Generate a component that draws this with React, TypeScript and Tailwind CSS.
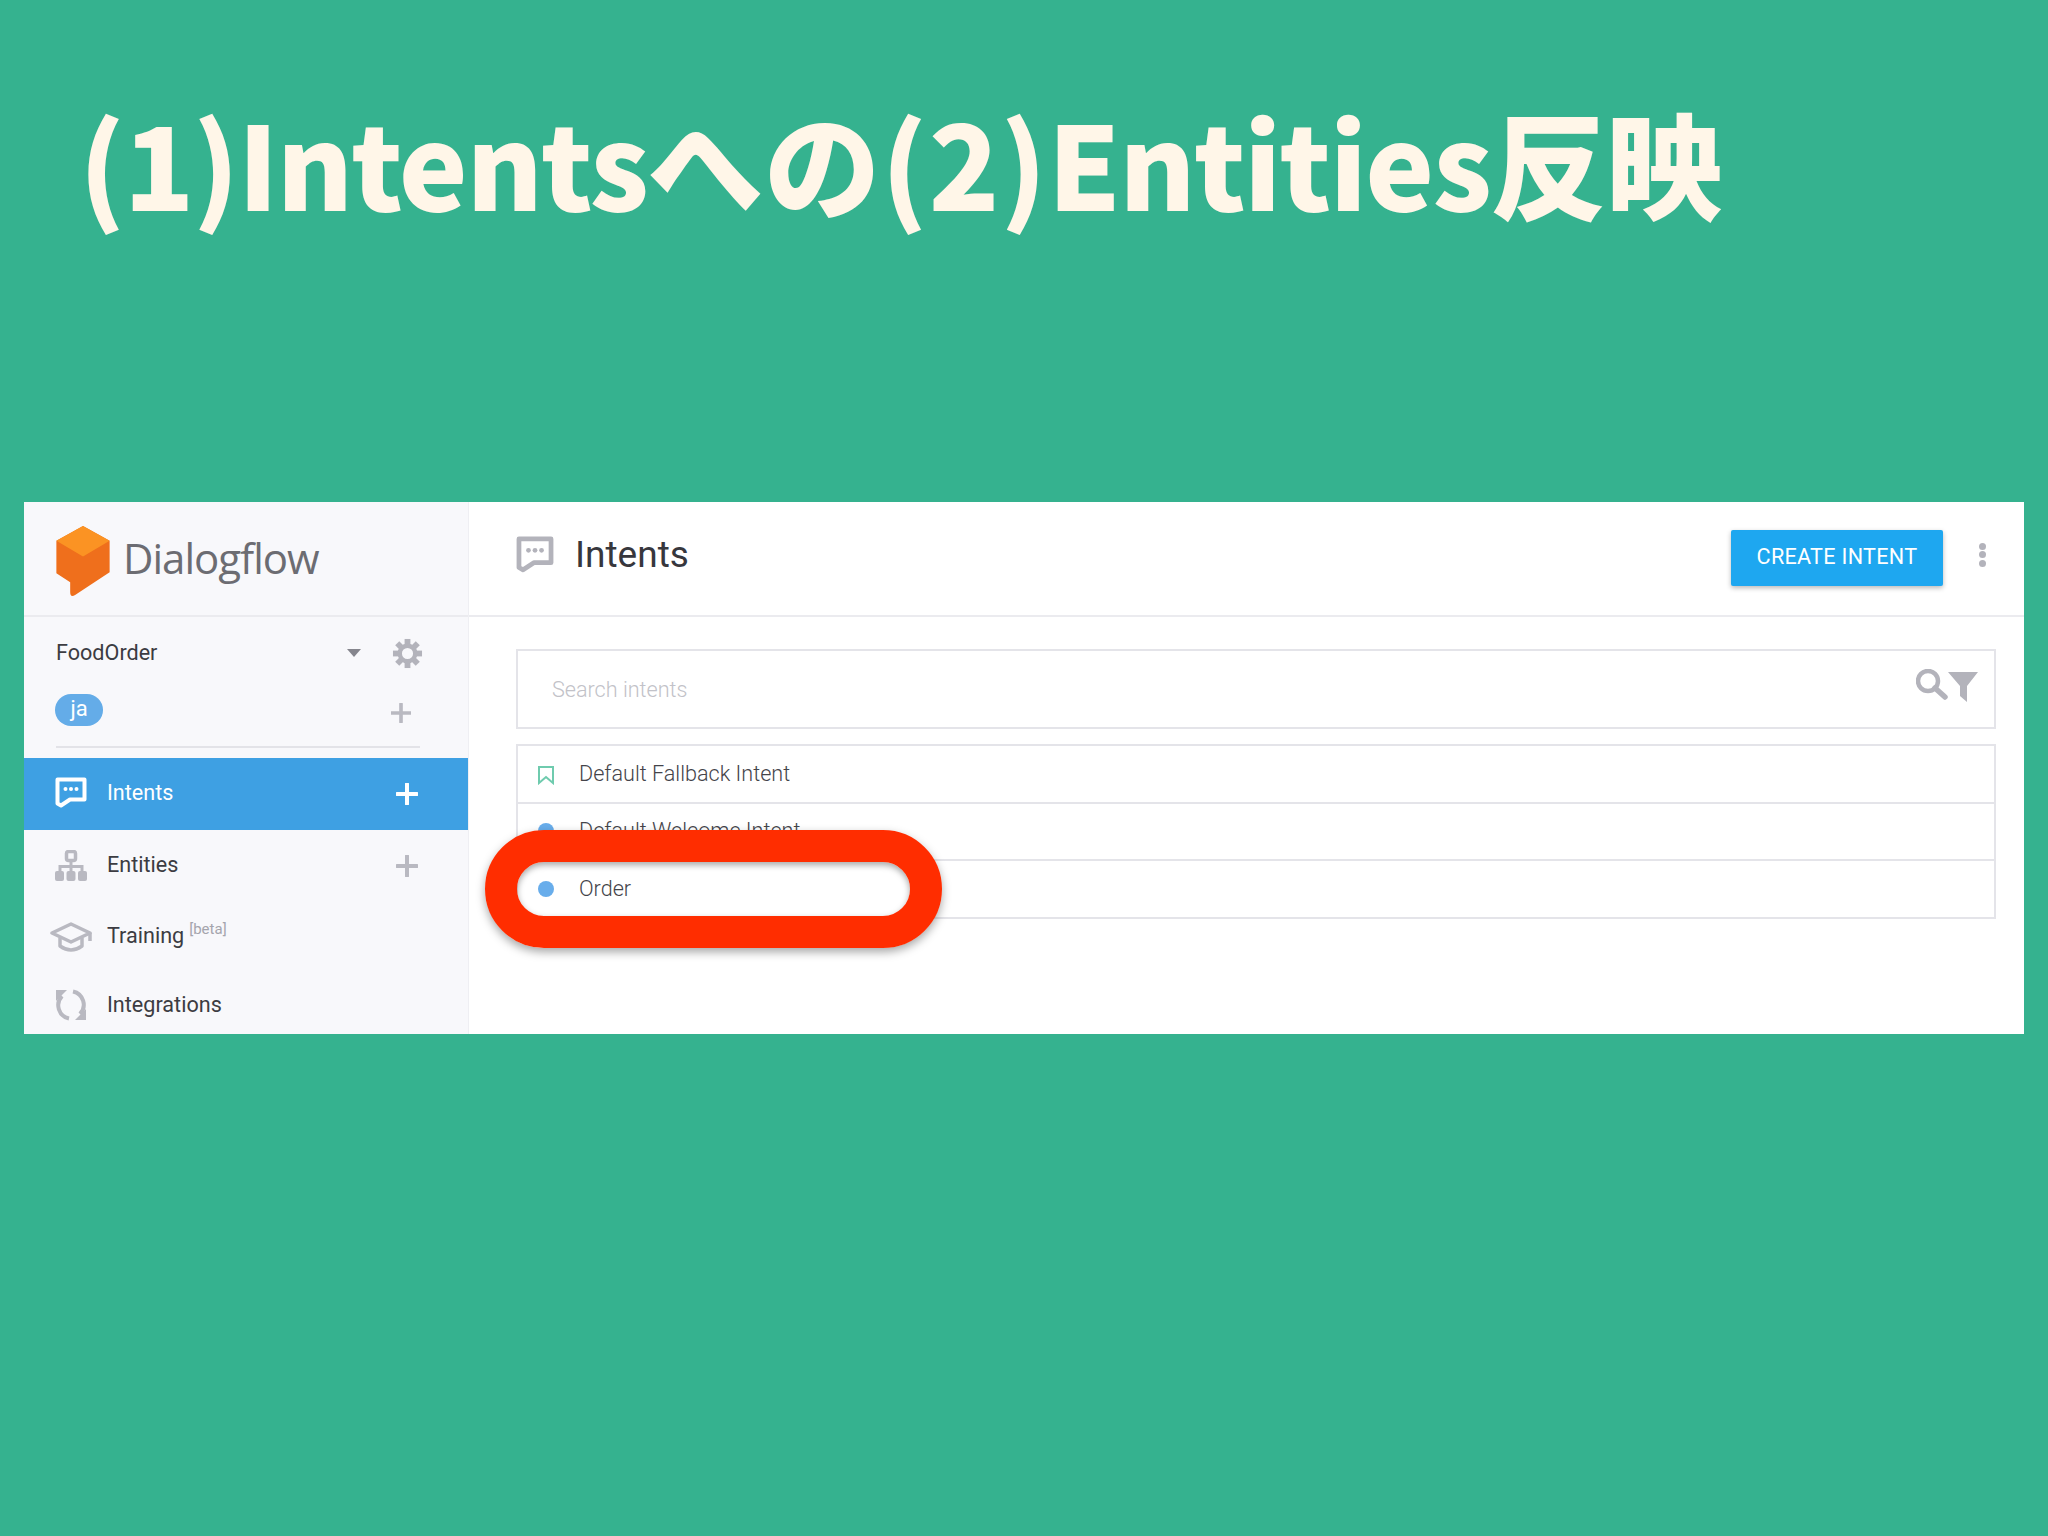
const ui = "font-['Roboto',sans-serif]";

function ChatIcon({ className, stroke }: { className: string; stroke: string }) {
  return (
    <svg viewBox="0 0 32 32" className={className} fill="none">
      <path d="M2.5 2.5 H29.5 V22.5 H15 L6 28.5 L2.5 26.5 Z" stroke={stroke} strokeWidth="4" strokeLinejoin="round" />
      <circle cx="10.5" cy="12" r="2" fill={stroke} />
      <circle cx="16" cy="12" r="2" fill={stroke} />
      <circle cx="21.5" cy="12" r="2" fill={stroke} />
    </svg>
  );
}

function Plus({ className, color }: { className: string; color: string }) {
  return (
    <svg viewBox="0 0 22 22" className={className}>
      <path d="M11 1 V21 M1 11 H21" stroke={color} strokeWidth="4" strokeLinecap="round" />
    </svg>
  );
}

function Gear() {
  const teeth = [0, 45, 90, 135, 180, 225, 270, 315];
  return (
    <svg viewBox="0 0 32 32" className="w-[31px] h-[31px]">
      {teeth.map((a) => (
        <rect key={a} x="13" y="1" width="6" height="8" fill="#b3b3bb" transform={`rotate(${a} 16 16)`} />
      ))}
      <circle cx="16" cy="16" r="8" fill="none" stroke="#b3b3bb" strokeWidth="4.5" />
    </svg>
  );
}

function Logo() {
  return (
    <svg viewBox="0 0 56 72" className="w-[56px] h-[71px] shrink-0 mt-[5px]">
      <path d="M28 0 L55 15 V47 L20 70 Q15 73 15 67 V57 L1 48 V15 Z" fill="#ef6f1c" />
      <path d="M28 0 L55 15 L28 31 L1 15 Z" fill="#fb9323" />
    </svg>
  );
}

function NavRow({ icon, label, extra, plus, height }: { icon: React.ReactNode; label: string; extra?: string; plus?: boolean; height: string }) {
  return (
    <div className={`${height} flex items-center pl-[31px] pr-[50px]`}>
      <div className="w-[52px] shrink-0 flex items-center">{icon}</div>
      <span className="text-[21.6px] text-[#3c3c42]">{label}</span>
      {extra && <span className="ml-[5px] -mt-[14px] text-[15px] text-[#a5a5ad]">{extra}</span>}
      {plus && <Plus className="ml-auto w-[22px] h-[22px]" color="#b9b9c1" />}
    </div>
  );
}

function IntentRow({ label, saved }: { label: string; saved?: boolean }) {
  return (
    <div className="h-[57.5px] last:h-[56px] flex items-center border-b-2 border-[#e4e4e9] last:border-b-0 pl-[20px]">
      <div className="w-[41px] shrink-0">
        {saved ? (
          <svg viewBox="0 0 16 19" className="w-[16px] h-[19px] mt-[4px]" fill="none">
            <path d="M1 1 H15 V17 L8 11 L1 17 Z" stroke="#6fcbae" strokeWidth="2" />
          </svg>
        ) : (
          <div className="w-[16px] h-[16px] rounded-full bg-[#68adeb]" />
        )}
      </div>
      <span className="text-[21.6px] font-light text-[#44444a]">{label}</span>
    </div>
  );
}

export default function App() {
  return (
    <div className={`relative w-[2048px] h-[1536px] overflow-hidden bg-[#35b28f] ${ui}`}>
      <h1 className="h-[502px] pl-[79px] pt-[80px] text-[116px] leading-[160px] font-black text-[#fff6e8] whitespace-nowrap font-['Noto_Sans_CJK_JP',sans-serif]">
        <span className="tracking-[-1.6px]">(1)Intents</span>
        <span className="tracking-[1px]">への</span>
        <span className="tracking-[1px]">(2)</span>
        <span className="tracking-[-1.6px]">Entities</span>
        <span>反映</span>
      </h1>

      <div className="mx-[24px] h-[532px] flex bg-white overflow-hidden">
        {/* sidebar */}
        <aside className="w-[445px] shrink-0 bg-[#f8f8fb] border-r border-[#efeff3]">
          <div className="h-[115px] flex items-center pl-[31px] gap-[12px] border-b-2 border-[#ebebef]">
            <Logo />
            <span className="font-['Open_Sans',sans-serif] text-[42px] tracking-[-1px] text-[#6c6c72] -mt-[3px]">Dialogflow</span>
          </div>
          <div className="h-[131px] ml-[32px] mr-[48px] border-b-2 border-[#e3e3e8] flex flex-col">
            <div className="h-[70px] flex items-center pt-[2px]">
              <span className="text-[21.6px] text-[#3c3c42]">FoodOrder</span>
              <div className="ml-auto mr-[31px] w-0 h-0 border-x-[7px] border-x-transparent border-t-[8px] border-t-[#85858d]" />
              <div className="mr-[-3px]"><Gear /></div>
            </div>
            <div className="flex items-start mt-[7px]">
              <span className="w-[48px] h-[32px] -ml-px rounded-full bg-[#64ace8] text-[22px] leading-[30px] text-white text-center">ja</span>
              <Plus className="ml-auto mr-[9px] mt-[9px] w-[20px] h-[20px]" color="#b9b9c1" />
            </div>
          </div>
          <div className="h-[10px]" />
          <div className="h-[72px] bg-[#3ea0e3] flex items-center pl-[31px] pr-[50px]">
            <div className="w-[52px] shrink-0 -mt-[2px]"><ChatIcon className="w-[32px] h-[32px]" stroke="#ffffff" /></div>
            <span className="text-[21.6px] text-white -mt-[2px]">Intents</span>
            <Plus className="ml-auto w-[22px] h-[22px]" color="#ffffff" />
          </div>
          <NavRow
            label="Entities"
            plus
            height="h-[71px]"
            icon={
              <svg viewBox="0 0 32 32" className="w-[32px] h-[32px]" fill="none">
                <rect x="11.5" y="1.5" width="9" height="9" rx="2" stroke="#b9b9c1" strokeWidth="3.5" />
                <path d="M16 10 V22 M5 22 V16.5 H27 V22" stroke="#b9b9c1" strokeWidth="3" />
                <rect x="0" y="21" width="9" height="10" rx="2" fill="#b9b9c1" />
                <rect x="11.5" y="21" width="9" height="10" rx="2" fill="#b9b9c1" />
                <rect x="23" y="21" width="9" height="10" rx="2" fill="#b9b9c1" />
              </svg>
            }
          />
          <NavRow
            label="Training"
            extra="[beta]"
            height="h-[71px]"
            icon={
              <svg viewBox="0 0 42 30" className="w-[42px] h-[30px] -ml-[5px] -mr-[4px] shrink-0" fill="none" stroke="#b9b9c1" strokeWidth="3.5" strokeLinejoin="round">
                <path d="M2 11 L21 2 L40 11 L21 20 Z" />
                <path d="M10 16 V24 Q21 32 32 24 V16" />
                <path d="M40 11 V19" />
              </svg>
            }
          />
          <NavRow
            label="Integrations"
            height="h-[66px]"
            icon={
              <svg viewBox="0 0 32 32" className="w-[32px] h-[32px]" fill="none">
                <path d="M7 7 A13.5 13.5 0 0 0 14 29.5" stroke="#b9b9c1" strokeWidth="4" />
                <path d="M18 2.5 A13.5 13.5 0 0 1 25 25" stroke="#b9b9c1" strokeWidth="4" />
                <path d="M1 1 H12 L1 12 Z" fill="#b9b9c1" />
                <path d="M31 31 H20 L31 20 Z" fill="#b9b9c1" />
              </svg>
            }
          />
        </aside>

        {/* main */}
        <main className="flex-1 min-w-0">
          <div className="h-[115px] flex items-center border-b-2 border-[#ebebef] pl-[47px] pr-[38px]">
            <ChatIcon className="w-[38px] h-[38px] -mt-[8px] mr-[21px] shrink-0" stroke="#b3b3bb" />
            <span className="text-[37px] text-[#37373d] -mt-[8px]">Intents</span>
            <button className="ml-auto w-[212px] h-[56px] -mt-[2px] rounded-[2px] bg-[#1ea7f0] text-[21.6px] tracking-[0.3px] text-white shadow-[0_2px_5px_rgba(0,0,0,0.28)]">
              CREATE INTENT
            </button>
            <div className="ml-[36px] flex flex-col gap-[1.5px] -mt-[8px]">
              <div className="w-[7px] h-[7px] rounded-full bg-[#b3b3bb]" />
              <div className="w-[7px] h-[7px] rounded-full bg-[#b3b3bb]" />
              <div className="w-[7px] h-[7px] rounded-full bg-[#b3b3bb]" />
            </div>
          </div>
          <div className="pt-[32px] pl-[47px] pr-[28px]">
            <div className="h-[80px] flex items-center border-2 border-[#e4e4e9] pl-[34px] pr-[16px]">
              <span className="text-[21.6px] font-light text-[#c2c2c8] mt-[2px]">Search intents</span>
              <svg viewBox="0 0 62 34" className="ml-auto w-[62px] h-[34px] -mt-[6px]">
                <circle cx="12" cy="12" r="10" fill="none" stroke="#b3b3bb" strokeWidth="4.5" />
                <path d="M19 19 L29 28" stroke="#b3b3bb" strokeWidth="5.5" strokeLinecap="round" />
                <path d="M32 3 H62 L51 17 V33 L44 27 V17 Z" fill="#b3b3bb" />
              </svg>
            </div>
            <div className="mt-[15px] border-2 border-[#e4e4e9]">
              <IntentRow label="Default Fallback Intent" saved />
              <IntentRow label="Default Welcome Intent" />
              <IntentRow label="Order" />
            </div>
          </div>
        </main>
      </div>

      {/* red marker drawn over the slide */}
      <div className="absolute left-[485px] top-[830px] w-[457px] h-[118px] rounded-full border-[32px] border-[#ff2d00] shadow-[0_4px_10px_rgba(0,0,0,0.35),inset_0_3px_6px_rgba(0,0,0,0.35)]" />
    </div>
  );
}
